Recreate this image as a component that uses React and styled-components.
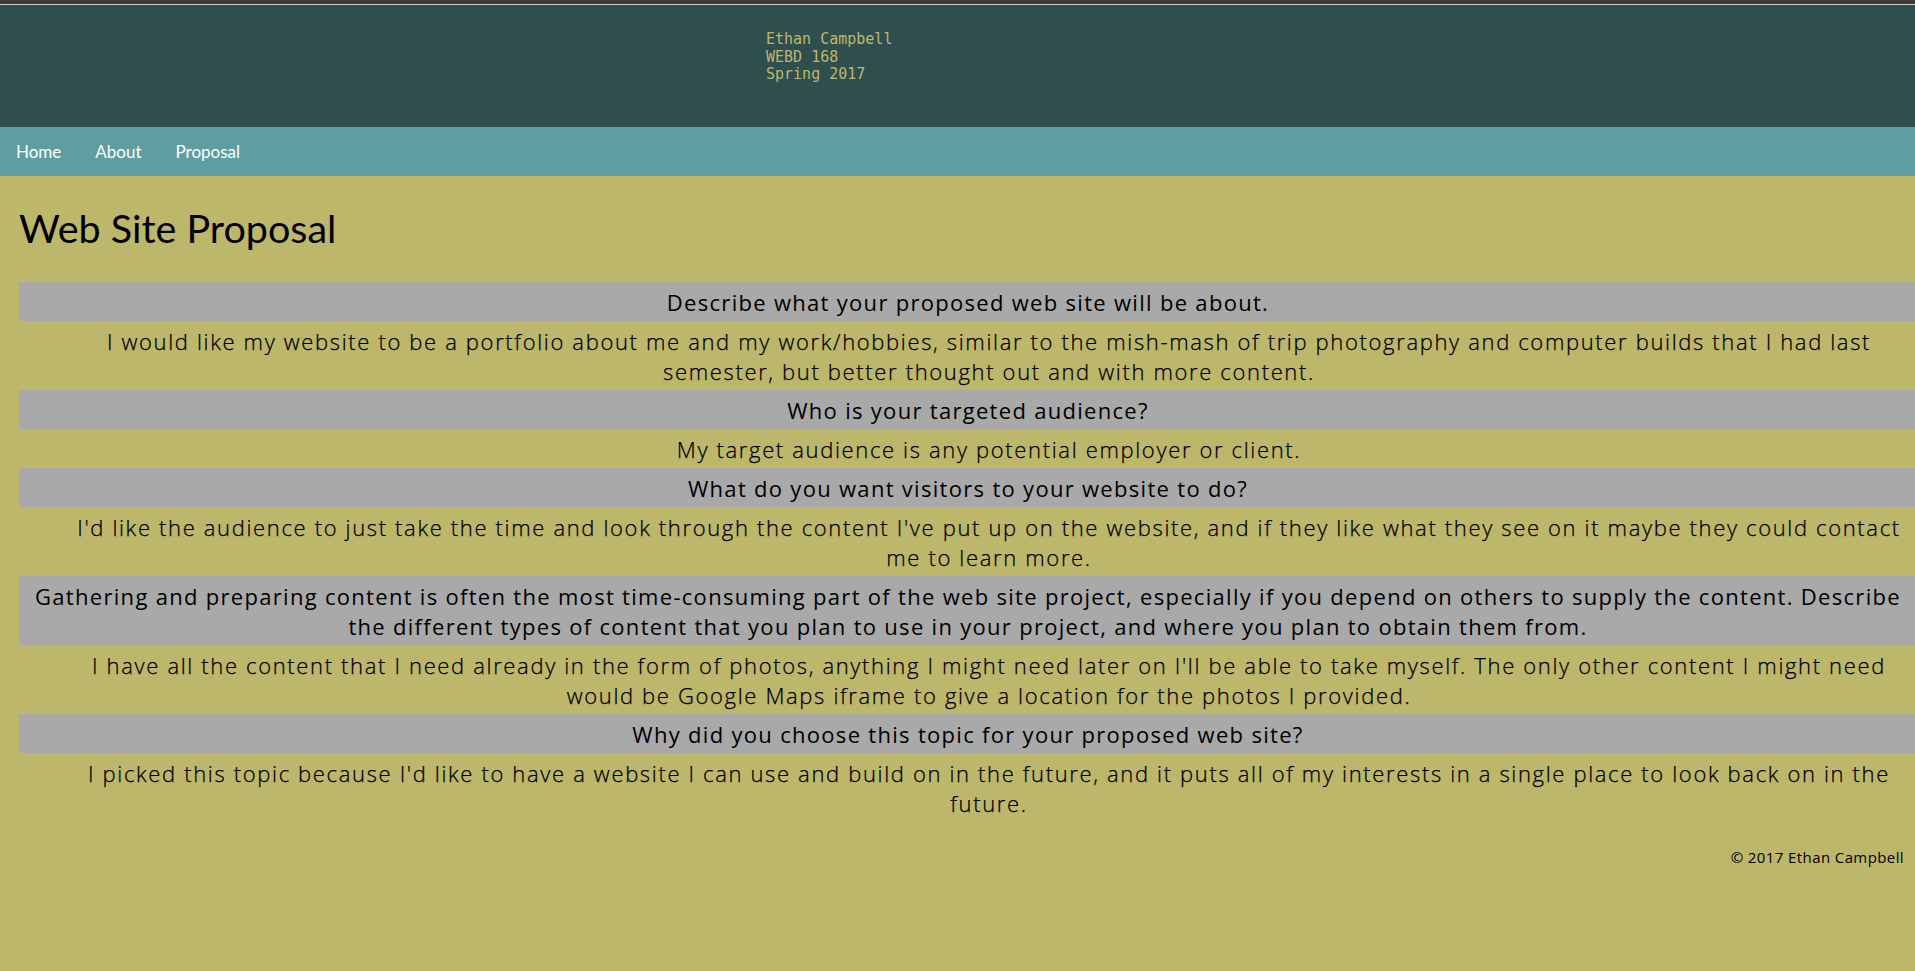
import React from 'react';
import styled, { createGlobalStyle } from 'styled-components';

const GlobalStyle = createGlobalStyle`
  html, body {
    margin: 0;
    padding: 0;
    background: #bdb76b;
  }
  body {
    font-family: "Open Sans", Lato, sans-serif;
    color: #000;
  }
`;

const Page = styled.div`
  min-height: 971px;
  background: #bdb76b;
`;

const TopStrip = styled.div`
  height: 4px;
  background: #3b3b3b;
  border-bottom: 1px solid #cfcfcf;
`;

const Header = styled.header`
  box-sizing: border-box;
  height: 122px;
  padding: 26px 0 0 40%;
  background: #2f4f4f;
  color: #bdb76b;
  font-family: "DejaVu Sans Mono", "Liberation Mono", monospace;
  font-size: 15px;
  line-height: 17.5px;
`;

const Nav = styled.nav`
  display: flex;
  align-items: center;
  gap: 34px;
  height: 49px;
  padding-left: 16px;
  background: #5f9ea0;
`;

const NavLink = styled.a`
  color: #fff;
  font-family: Lato, sans-serif;
  font-size: 17px;
  text-decoration: none;
`;

const Main = styled.main`
  padding-left: 19px;
`;

const Title = styled.h1`
  margin: 0;
  padding: 27px 0 29px;
  font-family: Lato, sans-serif;
  font-size: 39.5px;
  line-height: 50px;
  font-weight: 400;
`;

const Question = styled.h3`
  margin: 0;
  padding: 5px 10px 4px 12px;
  background: #a9a9a9;
  text-align: center;
  font-size: 22px;
  line-height: 30px;
  font-weight: 500;
  letter-spacing: 1.3px;
`;

const Answer = styled.p`
  margin: 0;
  padding: 5px 6px 4px 50px;
  text-align: center;
  font-size: 22px;
  line-height: 30px;
  font-weight: 300;
  letter-spacing: 1.65px;
  color: #000;
  -webkit-text-stroke: 0.25px #000;
`;

const Footer = styled.footer`
  padding: 26px 11px 0 0;
  text-align: right;
  font-size: 15px;
  line-height: 18px;
  letter-spacing: 0.4px;
`;

const items = [
  {
    q: 'Describe what your proposed web site will be about.',
    a: 'I would like my website to be a portfolio about me and my work/hobbies, similar to the mish-mash of trip photography and computer builds that I had last semester, but better thought out and with more content.',
  },
  {
    q: 'Who is your targeted audience?',
    a: 'My target audience is any potential employer or client.',
  },
  {
    q: 'What do you want visitors to your website to do?',
    a: "I'd like the audience to just take the time and look through the content I've put up on the website, and if they like what they see on it maybe they could contact me to learn more.",
  },
  {
    q: 'Gathering and preparing content is often the most time-consuming part of the web site project, especially if you depend on others to supply the content. Describe the different types of content that you plan to use in your project, and where you plan to obtain them from.',
    a: "I have all the content that I need already in the form of photos, anything I might need later on I'll be able to take myself. The only other content I might need would be Google Maps iframe to give a location for the photos I provided.",
  },
  {
    q: 'Why did you choose this topic for your proposed web site?',
    a: "I picked this topic because I'd like to have a website I can use and build on in the future, and it puts all of my interests in a single place to look back on in the future.",
  },
];

export default function App() {
  return (
    <Page>
      <GlobalStyle />
      <TopStrip />
      <Header>
        Ethan Campbell
        <br />
        WEBD 168
        <br />
        Spring 2017
      </Header>
      <Nav>
        <NavLink href="#">Home</NavLink>
        <NavLink href="#">About</NavLink>
        <NavLink href="#">Proposal</NavLink>
      </Nav>
      <Main>
        <Title>Web Site Proposal</Title>
        {items.map((item) => (
          <React.Fragment key={item.q}>
            <Question>{item.q}</Question>
            <Answer>{item.a}</Answer>
          </React.Fragment>
        ))}
        <Footer>© 2017 Ethan Campbell</Footer>
      </Main>
    </Page>
  );
}
